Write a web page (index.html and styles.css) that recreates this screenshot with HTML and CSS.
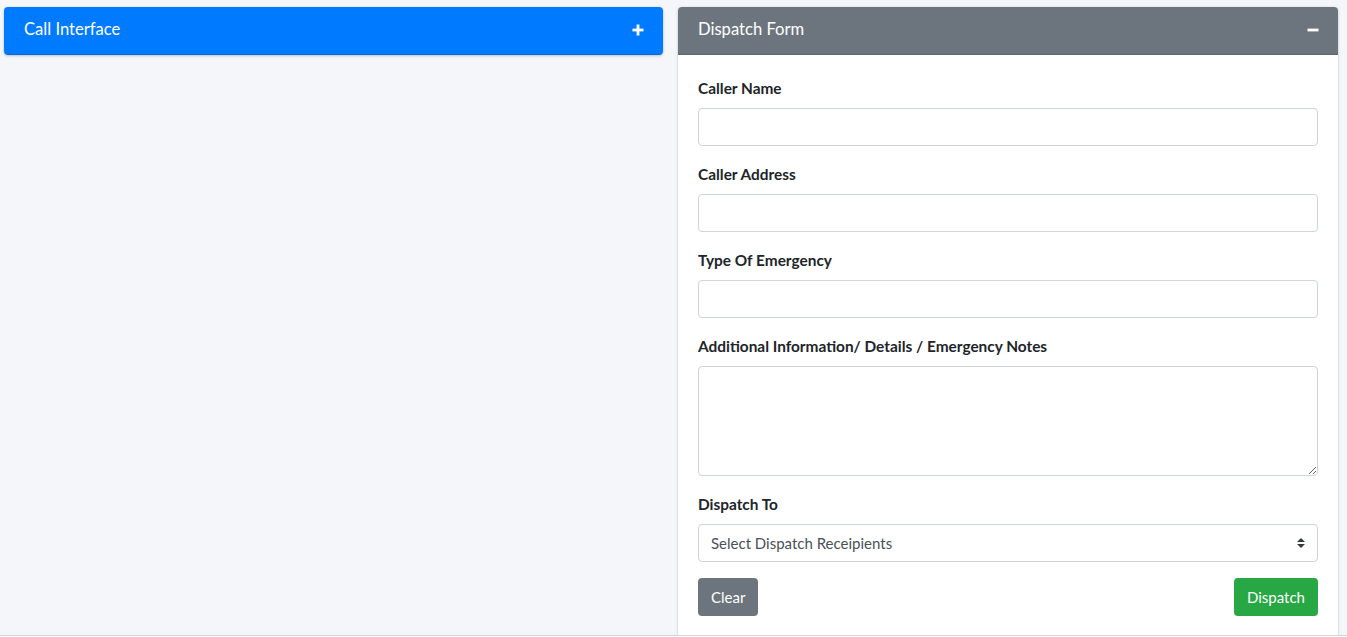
FILE: index.html
```html
<!DOCTYPE html>
<html lang="en">
<head>
  <meta charset="UTF-8" />
  <meta name="viewport" content="width=device-width, initial-scale=1.0" />
  <title>Dispatch</title>
  <link rel="stylesheet" href="styles.css">
</head>
<body>
<div class="content">
  <div class="row">
    <div class="col col-left">
      <div class="card card-primary">
        <div class="card-header">
          <h3 class="card-title">Call Interface</h3>
          <button class="tool-btn" type="button" aria-label="Expand">
            <svg width="12" height="14" viewBox="0 0 12 14"><rect x="4.6" y="1.5" width="2.8" height="11" fill="#fff"/><rect x="0.5" y="5.6" width="11" height="2.8" fill="#fff"/></svg>
          </button>
        </div>
      </div>
    </div>

    <div class="col">
      <div class="card card-secondary card-full">
        <div class="card-header">
          <h3 class="card-title">Dispatch Form</h3>
          <button class="tool-btn" type="button" aria-label="Collapse">
            <svg width="12" height="14" viewBox="0 0 12 14"><rect x="0.5" y="5.6" width="11" height="2.8" fill="#fff"/></svg>
          </button>
        </div>
        <div class="card-body">
          <div class="form-group">
            <label>Caller Name</label>
            <input class="form-control" type="text">
          </div>
          <div class="form-group">
            <label>Caller Address</label>
            <input class="form-control" type="text">
          </div>
          <div class="form-group">
            <label>Type Of Emergency</label>
            <input class="form-control" type="text">
          </div>
          <div class="form-group">
            <label>Additional Information/ Details / Emergency Notes</label>
            <textarea class="form-control notes"></textarea>
          </div>
          <div class="form-group">
            <label>Dispatch To</label>
            <div class="select-wrap">
              <select class="form-control custom-select">
                <option>Select Dispatch Receipients</option>
              </select>
              <svg class="select-arrow" width="10" height="12" viewBox="0 0 10 12"><path d="M5 1 L9 5 H1 Z M5 11 L1 7 H9 Z" fill="#343a40"/></svg>
            </div>
          </div>
          <div class="actions">
            <button class="btn btn-secondary" type="button">Clear</button>
            <button class="btn btn-success" type="button">Dispatch</button>
          </div>
        </div>
      </div>
    </div>
  </div>
</div>
<div class="footer"></div>
</body>
</html>
```

FILE: styles.css
```css
* {
  box-sizing: border-box;
}
html, body {
  height: 100%;
}
body {
  margin: 0;
  background: #f4f6f9;
  font-family: Lato, "Liberation Sans", sans-serif;
  font-size: 16px;
  color: #212529;
  overflow: hidden;
  display: flex;
  flex-direction: column;
}
.content {
  flex: 1;
  padding: 7px 9px 0 4px;
  min-height: 0;
}
.row {
  display: flex;
  gap: 15px;
  height: 100%;
}
.col {
  flex: 1 1 0;
  min-width: 0;
}
.col-left {
  flex: 0 0 659px;
}
.card {
  background: #fff;
  border-radius: 4px;
  box-shadow: 0 0 1px rgba(0,0,0,0.125), 0 1px 3px rgba(0,0,0,0.2);
  overflow: hidden;
}
.card-full {
  height: 100%;
  border-radius: 4px 4px 0 0;
}
.card-header {
  display: flex;
  align-items: center;
  justify-content: space-between;
  height: 48px;
  padding: 0 20px 2px;
  color: #fff;
  border-bottom: 1px solid rgba(0,0,0,0.125);
}
.card-primary .card-header {
  background: #007bff;
}
.card-secondary .card-header {
  background: #6c757d;
}
.card-title {
  margin: 0;
  font-size: 16.6px;
  font-weight: 400;
  line-height: 1.2;
}
.tool-btn {
  background: none;
  border: none;
  padding: 0;
  margin-right: -1px;
  display: flex;
  cursor: pointer;
}
.card-body {
  padding: 21px 20px 20px;
}
.form-group {
  margin-bottom: 16px;
}
.form-group label {
  display: block;
  font-weight: 700;
  font-size: 15.4px;
  line-height: 24px;
  margin-bottom: 8px;
}
.form-control {
  display: block;
  width: 100%;
  height: 38px;
  padding: 6px 12px;
  font-family: inherit;
  font-size: 16px;
  color: #495057;
  background: #fff;
  border: 1px solid #ced4da;
  border-radius: 4px;
}
.notes {
  height: 110px;
  resize: vertical;
}
.select-wrap {
  position: relative;
}
.custom-select {
  appearance: none;
  -webkit-appearance: none;
  padding-right: 30px;
  font-size: 15px;
}
.select-arrow {
  position: absolute;
  right: 12px;
  top: 13px;
  pointer-events: none;
}
.actions {
  display: flex;
  justify-content: space-between;
}
.btn {
  height: 38px;
  padding: 0 12px;
  font-family: inherit;
  font-size: 15px;
  color: #fff;
  border: 1px solid transparent;
  border-radius: 4px;
  cursor: pointer;
}
.btn-secondary {
  background: #6c757d;
}
.btn-success {
  background: #28a745;
}
.footer {
  height: 2px;
  border-top: 1px solid #d3d6da;
  background: #fff;
}
```
